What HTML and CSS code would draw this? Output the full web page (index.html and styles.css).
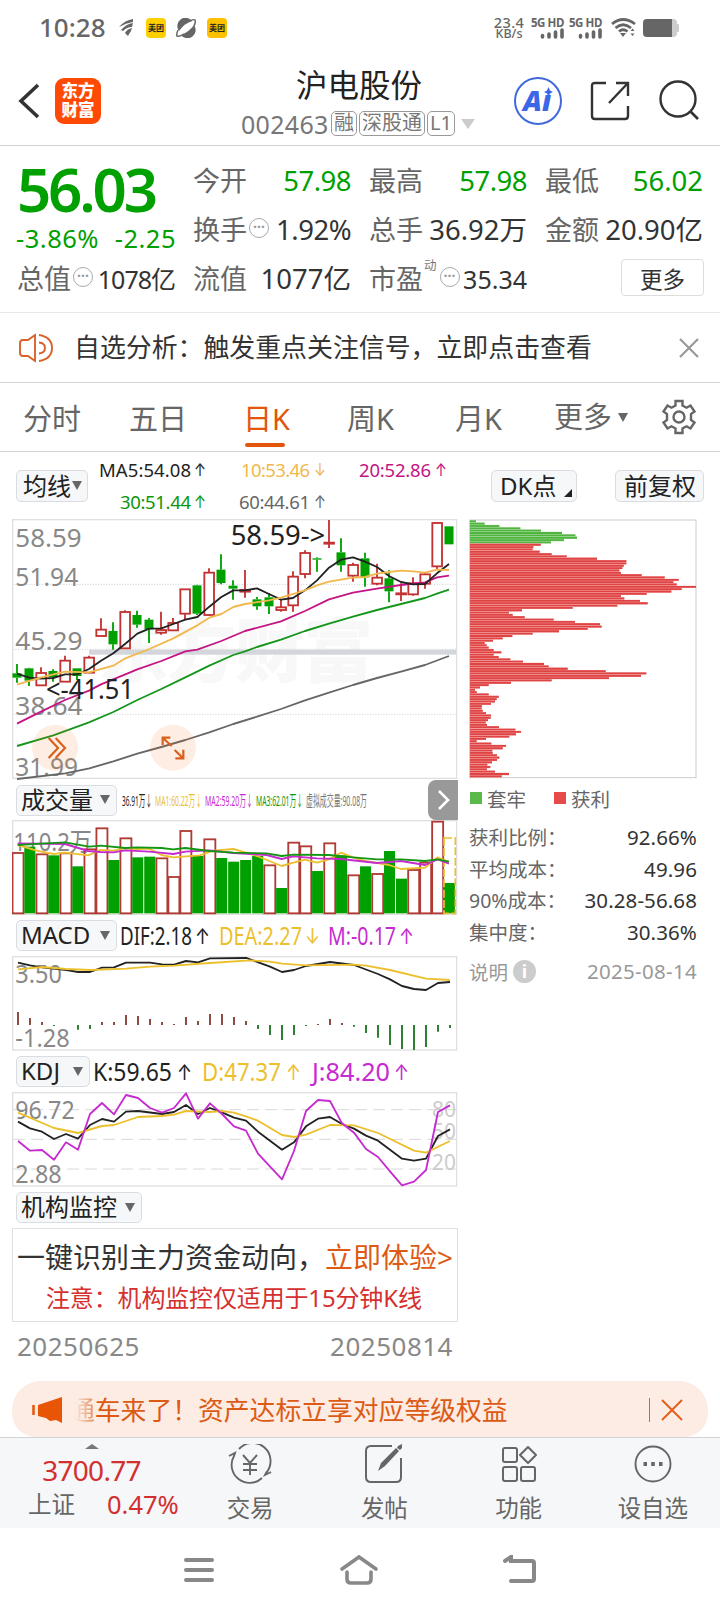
FILE: index.html
```html
<!DOCTYPE html>
<html lang="zh-CN">
<head>
<meta charset="UTF-8">
<title>沪电股份 002463</title>
<link rel="stylesheet" href="styles.css">
</head>
<body>

<!-- 状态栏 -->
<div class="status">
	<span class="clock">10:28</span>
	<svg class="st-wing" width="16" height="18" viewBox="0 0 16 18"><path d="M0 8Q6 1 14 0L14 3Q7 4 0 8ZM2 11Q7 5 14 4L13 8Q8 8 4 12ZM6 14Q8 10 13 9L12 12Q10 15 9 17Z" fill="#666"/></svg>
	<span class="mt">美团</span>
	<svg class="st-planet" width="21" height="20" viewBox="0 0 21 20"><path d="M3 13A8 8 0 0 1 16 3Q9 5 3 13ZM18 7A8 8 0 0 1 5 17Q13 14 18 7Z" fill="#666"/><path d="M2 12Q0 17 1 18Q4 19 8 16M14 3Q18 1 19 2Q20 4 18 8" fill="none" stroke="#666" stroke-width="1.500"/></svg>
	<span class="mt mt2">美团</span>
	<span class="speed"><b>23.4</b><i>KB/s</i></span>
	<span class="sim"><b>5G HD</b><svg width="24" height="11" viewBox="0 0 24 11"><path d="M2.500 9V7.500M9 9V6M15.500 9V4M22 9V2" stroke="#666" stroke-width="3.600" stroke-linecap="round"/></svg></span>
	<span class="sim"><b>5G HD</b><svg width="24" height="11" viewBox="0 0 24 11"><path d="M2.500 9V7.500M9 9V6M15.500 9V4M22 9V2" stroke="#666" stroke-width="3.600" stroke-linecap="round"/></svg></span>
	<svg class="wifi" width="25" height="20" viewBox="0 0 25 20"><path d="M1 6Q12 -3 24 6M4.500 10Q12 3.500 20 10M8 13.500Q12 10 16.500 13.500" fill="none" stroke="#666" stroke-width="2.800"/><path d="M9 15H15L12 19Z" fill="#666"/><path d="M19.500 13L21.500 10.500L23.500 13ZM19.500 15.500L21.500 18L23.500 15.500Z" fill="#666"/></svg>
	<svg class="battery" width="36" height="19" viewBox="0 0 36 19"><rect x="0" y="0" width="34" height="18" rx="4" fill="#ccc"/><rect x="33" y="5" width="3" height="8" rx="1" fill="#ccc"/><path d="M4 0H29V18H4Q0 18 0 14V4Q0 0 4 0Z" fill="#666"/></svg>
</div>

<!-- 标题栏 -->
<div class="header">
	<svg class="back" width="24" height="38" viewBox="0 0 24 38"><path d="M22 3L5 19L22 35" fill="none" stroke="#333" stroke-width="3.600"/></svg>
	<div class="logo">东方<br>财富</div>
	<div class="stock">
		<h1>沪电股份</h1>
		<div class="code"><span>002463</span><em>融</em><em>深股通</em><em>L1</em><svg width="14" height="10"><path d="M0 0H14L7 10Z" fill="#ccc"/></svg></div>
	</div>
	<svg class="tool-ai" width="48" height="48" viewBox="0 0 48 48"><circle cx="24" cy="24" r="23" fill="none" stroke="#4169dc" stroke-width="2"/><text x="9" y="34" class="ai-text" textLength="28" lengthAdjust="spacingAndGlyphs">Aı</text><path d="M34.500 10L36 13.500L39 15L36 16.500L34.500 19.500L33 16.500L30 15L33 13.500Z" fill="#3b66e8"/></svg>
	<svg class="tool-share" width="40" height="40" viewBox="0 0 40 40"><path d="M16 2H5Q2 2 2 5V35Q2 38 5 38H35Q38 38 38 35V25M26 2H38V15M38 2L19 22" fill="none" stroke="#333" stroke-width="2.400"/></svg>
	<svg class="tool-search" width="42" height="42" viewBox="0 0 42 42"><circle cx="20" cy="19" r="17.500" fill="none" stroke="#333" stroke-width="2.400"/><path d="M32 31L40 39" stroke="#333" stroke-width="2.600"/></svg>
</div>

<!-- 行情 -->
<div class="quote">
	<div class="price">
		<strong>56.03</strong>
		<div><span>-3.86%</span><span>-2.25</span></div>
	</div>
	<div class="cell"><label>今开</label><b class="down tight">57.98</b></div>
	<div class="cell"><label>最高</label><b class="down tight">57.98</b></div>
	<div class="cell"><label>最低</label><b class="down">56.02</b></div>
	<div class="cell"><label>换手</label><i class="dots">···</i><b class="tight">1.92%</b></div>
	<div class="cell"><label>总手</label><b>36.92万</b></div>
	<div class="cell"><label>金额</label><b>20.90亿</b></div>
	<div class="cell"><label>总值</label><i class="dots">···</i><b class="small">1078亿</b></div>
	<div class="cell"><label>流值</label><b>1077亿</b></div>
	<div class="cell"><label>市盈</label><sup>动</sup><i class="dots">···</i><b class="small pe">35.34</b></div>
	<div class="cell"><button class="more">更多</button></div>
</div>

<div class="notice">
	<svg width="34" height="30" viewBox="0 0 34 30"><path d="M16 2V28L9 23H4Q1 23 1 20V10Q1 7 4 7H9ZM20 9.500Q26 10 26 15Q26 20 20 20.500M20 2Q33 4 33 15Q33 26 20 28" fill="none" stroke="#d9622b" stroke-width="1.900"/></svg>
	<p>自选分析：触发重点关注信号，立即点击查看</p>
	<svg width="20" height="20" viewBox="0 0 20 20"><path d="M1 1L19 19M19 1L1 19" stroke="#999" stroke-width="2.200"/></svg>
</div>

<div class="tabs">
	<span>分时</span><span>五日</span><span class="on">日K</span><span>周K</span><span>月K</span><span class="tab-more">更多<svg width="10" height="9"><path d="M0 0H10L5 9Z" fill="#666"/></svg></span>
	<svg class="gear" width="36" height="36" viewBox="0 0 36 36"><path d="M14.500 2H21.500V6.500L25.500 8.700L29.500 6.500L33.500 12.500L30 15V21L33.500 23.500L29.500 29.500L25.500 27.300L21.500 29.500V34H14.500V29.500L10.500 27.300L6.500 29.500L2.500 23.500L6 21V15L2.500 12.500L6.500 6.500L10.500 8.700L14.500 6.500Z" fill="none" stroke="#666" stroke-width="2.400"/><circle cx="18" cy="18" r="5.500" fill="none" stroke="#666" stroke-width="2.400"/></svg>
</div>

<!-- 均线 -->
<div class="ma-row">
	<span class="btn ma-btn">均线<i class="tri"></i></span>
	<svg class="ma-read" width="362" height="67" viewBox="90 452 362 67">
		<g class="t18">
			<text x="99" y="477" textLength="92" fill="#222">MA5:54.08</text><text class="arr" x="194" y="476" textLength="12" lengthAdjust="spacingAndGlyphs" fill="#222">↑</text>
			<text x="241" y="477" textLength="69" fill="#f2b84b">10:53.46</text><text class="arr" x="314" y="476" textLength="12" lengthAdjust="spacingAndGlyphs" fill="#f2b84b">↓</text>
			<text x="359" y="477" textLength="72" fill="#c31583">20:52.86</text><text class="arr" x="435" y="476" textLength="12" lengthAdjust="spacingAndGlyphs" fill="#c31583">↑</text>
			<text x="120" y="509" textLength="71" fill="#0c960c">30:51.44</text><text class="arr" x="194" y="508" textLength="12" lengthAdjust="spacingAndGlyphs" fill="#0c960c">↑</text>
			<text x="239" y="509" textLength="71" fill="#666">60:44.61</text><text class="arr" x="314" y="508" textLength="12" lengthAdjust="spacingAndGlyphs" fill="#666">↑</text>
		</g>
	</svg>
	<span class="btn dk">DK点<svg width="8" height="8"><path d="M8 0V8H0Z" fill="#222"/></svg></span>
	<span class="btn fq">前复权</span>
</div>

<div class="body">
	<div class="charts">
		<svg id="kline" width="446" height="261" viewBox="36 12 1338 783"></svg>

		<div class="ind ind-vol">
			<span class="btn w101">成交量<i class="tri"></i></span>
			<svg width="252" height="24" viewBox="120 788 252 24">
				<g class="t15">
					<text x="122" y="806" textLength="30" lengthAdjust="spacingAndGlyphs" fill="#222">36.91万↓</text>
					<text x="155" y="806" textLength="47" lengthAdjust="spacingAndGlyphs" fill="#ecc02c">MA1:60.22万↓</text>
					<text x="205" y="806" textLength="48" lengthAdjust="spacingAndGlyphs" fill="#c52bcf">MA2:59.20万↓</text>
					<text x="256" y="806" textLength="47" lengthAdjust="spacingAndGlyphs" fill="#0c960c">MA3:62.01万↓</text>
					<text x="306" y="806" textLength="61" lengthAdjust="spacingAndGlyphs" fill="#777">虚拟成交量:90.08万</text>
				</g>
			</svg>
			<span class="expand"><svg width="12" height="20" viewBox="0 0 12 20"><path d="M1 1L10 10L1 19" fill="none" stroke="#fff" stroke-width="2.600"/></svg></span>
		</div>
		<svg id="vol" width="446" height="95" viewBox="36 120 1338 285"></svg>

		<div class="ind ind-macd">
			<span class="btn w101">MACD<i class="tri"></i></span>
			<svg width="320" height="32" viewBox="120 920 320 32">
				<g class="t24">
					<text x="120" y="945" textLength="72" lengthAdjust="spacingAndGlyphs" fill="#222">DIF:2.18</text><text class="arr" x="195" y="944" textLength="15" lengthAdjust="spacingAndGlyphs" fill="#222">↑</text>
					<text x="219" y="945" textLength="83" lengthAdjust="spacingAndGlyphs" fill="#ecc02c">DEA:2.27</text><text class="arr" x="305" y="944" textLength="15" lengthAdjust="spacingAndGlyphs" fill="#ecc02c">↓</text>
					<text x="328" y="945" textLength="68" lengthAdjust="spacingAndGlyphs" fill="#c52bcf">M:-0.17</text><text class="arr" x="399" y="944" textLength="15" lengthAdjust="spacingAndGlyphs" fill="#c52bcf">↑</text>
				</g>
			</svg>
		</div>
		<svg id="macd" width="446" height="95" viewBox="36 528 1338 285"></svg>

		<div class="ind ind-kdj">
			<span class="btn w75">KDJ<i class="tri"></i></span>
			<svg width="330" height="32" viewBox="93 1056 330 32">
				<g class="t24">
					<text x="93" y="1081" textLength="79" lengthAdjust="spacingAndGlyphs" fill="#222">K:59.65</text><text class="arr" x="177" y="1080" textLength="15" lengthAdjust="spacingAndGlyphs" fill="#222">↑</text>
					<text x="202" y="1081" textLength="79" lengthAdjust="spacingAndGlyphs" fill="#ecc02c">D:47.37</text><text class="arr" x="286" y="1080" textLength="15" lengthAdjust="spacingAndGlyphs" fill="#ecc02c">↑</text>
					<text x="312" y="1081" textLength="78" lengthAdjust="spacingAndGlyphs" fill="#c52bcf">J:84.20</text><text class="arr" x="394" y="1080" textLength="15" lengthAdjust="spacingAndGlyphs" fill="#c52bcf">↑</text>
				</g>
			</svg>
		</div>
		<svg id="kdj" width="446" height="95" viewBox="36 126 1338 285"></svg>

		<div class="ind ind-org">
			<span class="btn w126">机构监控<i class="tri"></i></span>
		</div>
		<div class="promo">
			<p>一键识别主力资金动向，<a>立即体验&gt;</a></p>
			<p class="warn">注意：机构监控仅适用于15分钟K线</p>
		</div>
		<div class="dates"><span>20250625</span><span>20250814</span></div>
	</div>

	<!-- 筹码分布 -->
	<div class="chips">
		<svg id="chip" width="228" height="260" viewBox="27 29 684 780"></svg>
		<div class="legend"><i class="sq g"></i>套牢<i class="sq r"></i>获利</div>
		<dl>
			<dt>获利比例：</dt><dd>92.66%</dd>
			<dt>平均成本：</dt><dd>49.96</dd>
			<dt>90%成本：</dt><dd>30.28-56.68</dd>
			<dt>集中度：</dt><dd>30.36%</dd>
		</dl>
		<div class="explain"><span>说明</span><i>i</i><time>2025-08-14</time></div>
	</div>
</div>

<div class="banner">
	<svg class="horn" width="31" height="26" viewBox="0 0 31 26"><path d="M1.500 8V18" stroke="#e85504" stroke-width="2.500"/><path d="M30 0V26L24 23L18 24L14 21L6 19V8Z" fill="#e85504"/></svg>
	<p><span>通</span>车来了！资产达标立享对应等级权益</p>
	<i class="bar"></i>
	<svg width="22" height="22" viewBox="0 0 22 22"><path d="M1 1L21 21M21 1L1 21" stroke="#e2601c" stroke-width="2"/></svg>
</div>

<!-- 底部导航 -->
<div class="nav">
	<div class="index">
		<svg width="14" height="5"><path d="M7 0L14 5H0Z" fill="#777"/></svg>
		<b>3700.77</b>
		<div><span>上证</span><em>0.47%</em></div>
	</div>
	<div class="item">
		<svg width="44" height="40" viewBox="0 0 44 40"><g fill="none" stroke="#666" stroke-width="1.900"><path d="M11 5A18 18 0 0 1 38 29L37 31L43 28M34 34A18 18 0 0 1 6 12L7 9L1 12M15 11L22 19L29 11M15 20H29M15 26H29M22 19V31"/></g></svg>
		<span>交易</span>
	</div>
	<div class="item">
		<svg width="38" height="40" viewBox="0 0 38 40"><path d="M27 2H6Q1 2 1 7V33Q1 38 6 38H31Q36 38 36 33V14" fill="none" stroke="#666" stroke-width="2"/><path d="M13 27L16 19L31 4L34 7L20 22ZM33 2L37 0L37 4L35 6L32 4Z" fill="#666"/></svg>
		<span>发帖</span>
	</div>
	<div class="item">
		<svg width="36" height="38" viewBox="0 0 36 38"><g fill="none" stroke="#666" stroke-width="2"><rect x="2" y="3" width="14" height="14" rx="2"/><rect x="2" y="22" width="14" height="14" rx="2"/><rect x="20" y="22" width="14" height="14" rx="2"/><path d="M27 2L35 10L27 18L19 10Z" stroke-linejoin="round"/></g></svg>
		<span>功能</span>
	</div>
	<div class="item">
		<svg width="38" height="38" viewBox="0 0 38 38"><circle cx="19" cy="19" r="17.500" fill="none" stroke="#666" stroke-width="1.900"/><path d="M9.500 17H13V21H9.500ZM17.200 17H20.800V21H17.200ZM25 17H28.500V21H25Z" fill="#666"/></svg>
		<span>设自选</span>
	</div>
</div>

<div class="sysnav">
	<svg width="32" height="28" viewBox="0 0 32 28"><path d="M3 4H29M3 14H29M3 24H29" stroke="#888" stroke-width="4" stroke-linecap="round"/></svg>
	<svg width="40" height="32" viewBox="0 0 40 32"><path d="M3 15L20 3L37 15" fill="none" stroke="#888" stroke-width="3.600" stroke-linecap="round"/><path d="M8 18V25Q8 29 12 29H28Q32 29 32 25V18" fill="none" stroke="#888" stroke-width="3.600" stroke-linecap="round"/></svg>
	<svg width="34" height="30" viewBox="0 0 34 30"><path d="M2 6L8 2V6H29Q31 6 31 8V24Q31 26 29 26H8" fill="none" stroke="#888" stroke-width="4" stroke-linecap="round"/></svg>
</div>

<script src="charts.js"></script>
</body>
</html>
```
FILE: styles.css
```css
* {box-sizing: border-box; margin: 0; padding: 0;}

body {width: 720px; height: 1612px; overflow: hidden; background: #fff; color: #333;
	font-family: "Noto Sans", "Noto Sans CJK SC", sans-serif; display: flex; flex-direction: column;}
body > div {flex: none;}
svg {display: block; flex: none;}
svg text {white-space: pre;}
i, em {font-style: normal;}
b {font-weight: normal;}

/* 状态栏 */
.status {height: 60px; display: flex; align-items: center; padding: 0 41px 4px 39px; color: #666;}
.clock {font-size: 26px; width: 80px; font-weight: 500; line-height: 30px; position: relative; top: -1px;}
.mt {width: 20px; height: 20px; border-radius: 4px; background: #ffd000; color: #222; font-size: 8px; font-weight: bold; line-height: 20px; text-align: center; margin: 0 10px 0 11px;}
.mt2 {background: #ffc000; margin-left: 10px;}
.speed {display: flex; flex-direction: column; align-items: center; margin-left: auto; width: 34px; font-weight: 500; line-height: 12.500px;}
.speed b {font-size: 14.500px; font-weight: 500; letter-spacing: .4px;}
.speed i {font-size: 12.500px;}
.sim {display: flex; flex-direction: column; align-items: flex-end; width: 32px; margin-left: 6px;}
.sim b {font-size: 11.500px; font-weight: bold; line-height: 11px; white-space: nowrap; letter-spacing: -.4px;}
.wifi {margin-left: 9px;}
.battery {margin-left: 7px;}

/* 标题栏 */
.header {height: 86px; border-bottom: 1px solid #d2d2d2; display: flex; align-items: center; padding: 0 20px 4px 16px;}
.logo {width: 46px; height: 46px; margin-left: 15px; border-radius: 9px; background: #ff4a05; color: #fff; font-size: 16.500px; font-weight: 900; line-height: 19px; text-align: center; padding-top: 3px;}
.stock {width: 234px; margin-left: 141px; padding-top: 4px; display: flex; flex-direction: column;}
.stock h1 {font-size: 31.500px; font-weight: normal; line-height: 40px; color: #222; text-align: center;}
.code {display: flex; align-items: center; height: 30px; font-size: 25px; color: #777; margin-top: 4px; margin-bottom: 2px; margin-left: -1px;}
.code span {width: 90px; letter-spacing: .3px;}
.code em {height: 25px; border: 1.500px solid #999; border-radius: 5px; font-size: 20px; line-height: 21px; padding: 0 2px; margin-right: 2px;}
.code svg {margin-left: 4px;}
.tool-ai {margin-left: 38px;}
.ai-text {font-family: "Noto Sans"; font-weight: 900; font-size: 28px; font-style: italic; fill: #3b66e8;}
.tool-share {margin-left: 28px;}
.tool-search {margin-left: auto;}

/* 行情 */
.quote {height: 167px; border-bottom: 1px solid #e8e8e8; padding: 10px 17px 8px; display: grid; grid-template-columns: repeat(4, 158px); grid-template-rows: 49px 49.500px 49.500px; column-gap: 18px;}
.price {grid-row: span 2; color: #00a000; display: flex; flex-direction: column;}
.price strong {font-size: 60px; font-weight: 600; line-height: 66px; letter-spacing: -3.200px; height: 66px;}
.price div {display: flex; justify-content: space-between; font-size: 25.500px; line-height: 32px; margin: 0 -1px; letter-spacing: .5px;}
.cell {display: flex; align-items: center; line-height: 40px;}
.cell label {font-size: 27px; color: #666;}
.cell b {margin-left: auto; font-size: 27.500px; letter-spacing: 0; white-space: nowrap;}
.cell b.down {color: #00a000;}
.cell b.tight {letter-spacing: -.5px;}
.cell b.small {font-size: 25px; letter-spacing: -1px;}
.cell b.pe {letter-spacing: 0;}
.cell sup {font-size: 12.500px; line-height: 14px; color: #777; align-self: flex-start; margin: 4px 1px 0 1px;}
.dots {width: 20px; height: 20px; border: 1.500px solid #aaa; border-radius: 50%; font-size: 14px; font-weight: bold; line-height: 16px; color: #999; text-align: center; margin: 0 0 4px 2px;}
.more {margin-left: auto; margin-right: -1px; margin-bottom: 3px; width: 83px; height: 37px; border: 1px solid #ddd; border-radius: 4px; background: #fff; font: 22.500px/32px "Noto Sans CJK SC", sans-serif; color: #333;}

.notice {height: 70px; border-bottom: 1px solid #d6d6d6; display: flex; align-items: center; padding: 0 21px 0 19px;}
.notice p {font-size: 25.900px; margin-left: 21px; flex: 1; white-space: nowrap; line-height: 36px; position: relative; top: -1px;}

.tabs {height: 69px; border-bottom: 1px solid #d2d2d2; display: flex; align-items: center; font-size: 29px; color: #666;}
.tabs span {line-height: 72px; height: 68px; white-space: nowrap; width: 106px; padding-left: 23px;}
.tabs span:nth-child(3) {width: 103px; padding-left: 31px;}
.tabs span:nth-child(4) {width: 107px; padding-left: 32px;}
.tabs span:nth-child(5) {width: 132px; padding-left: 33px;}
.tabs .on {color: #e2560c; position: relative;}
.tabs .on::after {content: ""; position: absolute; left: 33px; bottom: 4px; width: 40px; height: 4px; border-radius: 2px; background: #e2560c;}
.tabs .tab-more {padding-left: 0; display: flex; align-items: center; gap: 6px;}
.gear {margin-left: auto; margin-right: 23px;}

/* 按钮 */
.btn {display: flex; align-items: center; height: 32px; border: 1px solid #d9dce1; border-radius: 5px; background: #f6f7f9; color: #222; font-size: 24px; line-height: 28px; padding: 0 5px 1px 4px; white-space: nowrap; flex: none;}
.tri {border: 5px solid transparent; border-top: 9px solid #666; border-bottom: 0; margin-left: auto;}
.ma-row {height: 67px; display: flex; padding-left: 16px;}
.ma-row .btn {margin-top: 18px;}
.ma-btn {width: 72px; padding-left: 6px;}
.ma-read {margin-left: 2px;}
.dk {width: 86px; margin-left: 39px; padding: 0 4px 1px 8px; justify-content: space-between;}
.dk svg {align-self: flex-end; margin-bottom: 3px;}
.fq {width: 89px; margin-left: 38px; padding: 0 8px 1px;}
.t18 {font-size: 18.500px;}
.t15 {font-size: 15px;}
.t24 {font-size: 24.500px;}
.arr {font-family: Inter, "DejaVu Sans", sans-serif; font-size: 17px;}
.t24 .arr {font-size: 22px;}

/* 图表区 */
.body {height: 862px; display: flex; padding-left: 12px;}
.charts {width: 446px; display: flex; flex-direction: column;}
.charts > * {flex: none;}
.ind {display: flex; padding-left: 4px; position: relative; align-items: center;}
.ind .btn {height: 31px;}
.ind svg {margin-left: 3px;}
.ind-vol {height: 40px;}
.ind-macd {height: 41px;}
.ind-kdj {height: 41px;}
.ind-org {height: 41px;}
.w101 {width: 101px;}
.w75 {width: 74px;}
.w126 {width: 126px;}
.ind .tri {margin-right: 1px;}
.expand {position: absolute; right: 0; top: 0; width: 30px; height: 40px; background: #999; border-radius: 8px 0 0 8px; display: flex; align-items: center; justify-content: center;}
.expand svg {margin-left: 2px;}
.promo {height: 94px; border: 1.500px solid #e0e0e0; padding: 6px 0 0 4px; font-size: 28px; white-space: nowrap;}
.promo p {line-height: 44px;}
.promo a {color: #dd5a14;}
.promo .warn {font-size: 24px; line-height: 37px; color: #d5302f; margin-left: 29px; letter-spacing: -.15px;}
.dates {display: flex; justify-content: space-between; padding: 0 5px; font-size: 26px; line-height: 49px; color: #888; letter-spacing: .5px;}

.grid-text {font-size: 78px; fill: #888;}
.mark {font-size: 81px; fill: #222;}
.water {font-size: 210px; font-weight: 900; fill: #f8f8f8; font-family: "Noto Sans CJK SC", sans-serif;}
.level {font-size: 66px; fill: #ccc;}

.chips {width: 228px; margin-left: 11px;}
.legend {display: flex; align-items: center; height: 38px; font-size: 19.500px; color: #666;}
.sq {width: 12px; height: 12px; margin: 0 5px 0 1px;}
.sq.g {background: #5ab948;}
.sq.r {background: #e54b4b; margin-left: 28px;}
.chips dl {display: grid; grid-template-columns: auto auto; grid-auto-rows: 31.600px; padding-top: 5px;}
.chips dt {font-size: 19.500px; line-height: 31px; color: #666; white-space: nowrap;}
.chips dd {font-size: 20.500px; line-height: 31px; color: #333; text-align: right; letter-spacing: .1px;}
.explain {display: flex; align-items: center; height: 30px; margin-top: 8px; color: #999; font-size: 19.500px;}
.explain i {width: 23px; height: 23px; border-radius: 50%; background: #ccc; color: #fff; font-weight: bold; font-size: 18px; line-height: 22px; text-align: center; margin-left: 5px;}
.explain time {margin-left: auto; font-size: 20.500px; letter-spacing: .3px;}

/* 横幅 */
.banner {height: 56px; margin: 0 12px; background: #fcece3; border-radius: 29px 29px 24px 24px; display: flex; align-items: center; padding: 2px 25px 0 20px; color: #dd5a14;}
.banner p {font-size: 25.800px; white-space: nowrap; margin-left: 6px; line-height: 40px;}
.banner p span {background: linear-gradient(90deg, #fcece3 20%, #e08a58); -webkit-background-clip: text; background-clip: text; color: transparent;}
.banner .bar {width: 1.500px; height: 24px; background: #c66a38; margin-left: auto; margin-right: 11px;}

.nav {height: 91px; border-top: 1px solid #d0d3d6; background: #f6f7f9; display: flex; color: #666;}
.index {width: 183px; display: flex; flex-direction: column; align-items: center; padding-top: 6px; color: #d22f2f;}
.index b {font-size: 28px; line-height: 36px; letter-spacing: -.7px; margin-top: 3px;}
.index div {align-self: stretch; display: flex; padding-left: 28px; line-height: 32px; font-size: 25.500px;}
.index div span {font-size: 23.500px; color: #666; width: 79px;}
.item {flex: 1; display: flex; flex-direction: column; align-items: center; padding-top: 6px; font-size: 23.500px;}
.item svg {height: 40px;}
.item span {line-height: 34px; margin-top: 7px;}

.sysnav {height: 84px; display: flex; justify-content: center; align-items: center; gap: 124px;}
```
FILE: charts.js
```js
var NS = "http://www.w3.org/2000/svg";
var RED = "#c33232", GREEN = "#00a000";

function add(svg, name, attrs, text) {
	var el = document.createElementNS(NS, name);
	for (var k in attrs) el.setAttribute(k, attrs[k]);
	if (text) el.textContent = text;
	svg.appendChild(el);
	return el;
}
function line(svg, pts, color, w) {
	add(svg, "polyline", {points: pts, fill: "none", stroke: color, "stroke-width": w || 5.5, "stroke-linejoin": "round"});
}
function frame(svg, y, h) {
	add(svg, "rect", {x: 38, y: y, width: 1332, height: h, fill: "none", stroke: "#e0e0e0", "stroke-width": 4});
}
function label(svg, x, y, w, cls, text) {
	add(svg, "text", {x: x, y: y, textLength: w, lengthAdjust: "spacingAndGlyphs", "class": cls}, text);
}

// ---- 日K ----
var k = document.getElementById("kline");
add(k, "text", {x: 295, y: 487, textLength: 825, "class": "water"}, "东方财富");
[208, 403, 598].forEach(function (y) {
	add(k, "path", {d: "M38 " + y + "H1370", stroke: "#ccc", "stroke-width": 3, "stroke-dasharray": "3 5"});
});
add(k, "rect", {x: 267, y: 404, width: 1104, height: 15, fill: "#d3d7dc"});
frame(k, 14, 776);
label(k, 46, 97, 199, "grid-text", "58.59");
label(k, 46, 213, 189, "grid-text", "51.94");
label(k, 46, 406, 202, "grid-text", "45.29");
label(k, 46, 600, 202, "grid-text", "38.64");
label(k, 46, 783, 188, "grid-text", "31.99");

// 颜色, 最高, 实体上, 实体下, 最低
var candles = [
	["g",447,475,488,503],["g",458,460,497,513],["r",457,474,511,511],["g",463,468,486,500],["r",422,437,500,500],
	["g",460,460,483,495],["r",422,428,473,473],["r",310,344,363,363],["g",322,348,388,404],["r",286,291,400,400],
	["g",287,300,329,338],["g",309,314,343,384],["r",290,345,353,359],["r",309,324,346,346],["r",222,223,296,313],
	["g",209,211,296,300],["r",160,173,300,300],["g",118,164,204,208],["g",196,212,221,254],["r",165,225,230,248],
	["g",246,253,274,284],["g",234,247,274,297],["r",253,277,285,290],["r",169,185,271,290],["r",106,114,177,190],
	["g",127,130,134,170],["r",15,83,86,99],["g",70,112,151,170],["r",143,150,182,200],["g",113,130,187,215],
	["r",146,188,206,211],["g",166,190,229,262],["r",205,235,238,258],["r",187,205,238,242],["r",173,178,206,221],
	["r",22,24,154,165],["g",34,34,88,88]
];
candles.forEach(function (c, i) {
	var x = 51 + 36 * i, color = c[0] == "g" ? GREEN : RED;
	add(k, "path", {d: "M" + x + " " + c[1] + "V" + c[2] + "M" + x + " " + c[3] + "V" + c[4], stroke: color, "stroke-width": 5.5});
	if (c[0] == "g") {
		add(k, "rect", {x: x - 13.5, y: c[2], width: 27, height: c[3] - c[2], fill: color});
	} else {
		add(k, "rect", {x: x - 14, y: c[2], width: 29, height: Math.max(c[3] - c[2], 1), fill: "#fff", stroke: color, "stroke-width": 5.5});
	}
});
line(k, "51,792 196,775 268,760 340,739 412,716 484,696 556,675 628,652 700,627 771,605 843,582 915,556 987,533 1059,510 1131,489 1203,470 1275,450 1347,423", "#666");
line(k, "51,693 160,661 267,622 340,591 412,555 484,522 556,487 628,452 700,420 735,409 771,396 843,374 915,348 987,326 1059,305 1131,285 1203,267 1275,249 1311,236 1347,224", "#14961a");
line(k, "51,626 123,590 195,555 267,527 303,508 376,478 412,463 484,438 556,409 592,404 664,378 735,348 843,319 915,288 987,253 1059,233 1131,221 1203,210 1275,202 1311,187 1347,182", "#c31583");
line(k, "51,476 87,488 123,491 159,489 195,478 231,478 267,462 303,437 340,415 376,386 412,356 448,341 484,340 520,327 556,314 592,306 628,275 664,246 700,226 735,226 771,220 807,237 843,254 879,249 915,226 951,196 987,158 1023,134 1059,127 1095,140 1131,156 1167,183 1203,201 1239,208 1275,207 1311,175 1347,147", "#222");
line(k, "51,509 123,487 195,470 267,472 340,452 376,430 448,402 520,370 592,331 628,308 664,297 700,276 735,267 807,256 843,248 915,226 951,211 987,200 1059,188 1095,186 1131,176 1167,171 1203,167 1239,169 1275,173 1311,164 1347,165", "#f2b84b");
label(k, 692, 91, 284, "mark", "58.59->");
label(k, 138, 553, 264, "mark", "<-41.51");
add(k, "circle", {cx: 165, cy: 698, r: 69, fill: "#f56b1c", opacity: .12});
add(k, "circle", {cx: 519, cy: 698, r: 69, fill: "#f56b1c", opacity: .12});
add(k, "path", {d: "M146 669L174 699L146 729M167 669L195 699L167 729M488 690V668H511M489 669L515 693M524 705L549 730M526 730H550V704", fill: "none", stroke: "#d9601c", "stroke-width": 6.5});

// ---- 成交量 ----
var v = document.getElementById("vol");
frame(v, 122, 281);
label(v, 40, 213, 236, "grid-text", "110.2万");
var vols = "r219 g200 r223 g226 r220 g259 r208 r145 g240 r175 g232 g230 r235 r291 r153 g228 r178 g234 g245 g240 g228 r256 g324 r188 r199 g273 r190 g226 r286 g259 r282 g213 g296 r270 r248 r125 g309".split(" ");
vols.forEach(function (s, i) {
	var x = 53.5 + 35.97 * i, y = +s.slice(1);
	if (s[0] == "g") {
		add(v, "rect", {x: x - 16.5, y: y, width: 33, height: 400 - y, fill: GREEN});
	} else {
		add(v, "rect", {x: x - 16, y: y, width: 33, height: 400 - y, fill: "none", stroke: "#b03a34", "stroke-width": 5.5});
	}
});
add(v, "rect", {x: 1332, y: 174, width: 34, height: 226, fill: "none", stroke: "#ecc02c", "stroke-width": 5, "stroke-dasharray": "24 7"});
line(v, "53,195 110,212 160,222 195,218 265,226 300,210 340,212 376,205 412,207 448,206 484,225 520,232 600,226 640,212 700,207 735,217 771,228 845,258 880,248 915,239 951,248 987,238 1023,218 1059,232 1095,243 1167,255 1203,267 1275,263 1313,232 1347,246", "#ecc02c");
line(v, "53,190 195,192 265,213 300,216 340,217 376,211 448,215 520,222 556,215 628,211 700,219 800,225 845,237 880,229 951,235 1023,237 1131,249 1203,243 1275,255 1313,238 1347,251", "#c52bcf");
line(v, "53,195 123,191 195,187 267,200 303,197 376,204 412,202 484,204 520,208 556,204 628,213 700,218 800,220 845,228 880,224 987,225 1059,232 1131,238 1203,238 1275,243 1313,238 1347,245", "#149614");

// ---- MACD ----
var m = document.getElementById("macd");
frame(m, 530, 280);
label(m, 46, 609, 140, "grid-text", "3.50");
label(m, 46, 801, 163, "grid-text", "-1.28");
[696,714,726,738,735,749,747,726,726,705,708,717,726,732,711,723,702,702,711,723,747,765,780,765,738,732,717,729,740,759,773,795,807,810,801,755,744].forEach(function (y, i) {
	add(m, "path", {d: "M" + (54 + 36 * i) + " 735V" + y, stroke: y < 735 ? "#8f4a44" : "#2f7f33", "stroke-width": 6});
});
line(m, "54,548 90,556 126,562 200,570 234,576 270,576 306,563 342,562 378,548 450,548 486,553 522,554 558,543 594,547 630,535 740,534 775,547 810,560 846,576 882,570 918,558 990,546 1062,555 1134,582 1170,598 1206,618 1242,627 1278,630 1314,609 1350,606", "#222");
line(m, "54,568 126,561 198,567 270,570 378,566 450,560 522,557 630,549 750,541 810,545 846,551 918,556 1062,554 1098,557 1170,570 1278,596 1350,600", "#ecc02c");

// ---- KDJ ----
var j = document.getElementById("kdj");
frame(j, 128, 280);
[179, 268, 357].forEach(function (y) {
	add(j, "path", {d: "M40 " + y + "H1370", stroke: "#d8d8d8", "stroke-width": 3, "stroke-dasharray": "35 19"});
});
label(j, 46, 208, 178, "grid-text", "96.72");
label(j, 46, 399, 139, "grid-text", "2.88");
label(j, 1296, 200, 72, "level", "80");
label(j, 1296, 268, 72, "level", "50");
label(j, 1296, 360, 72, "level", "20");
line(j, "54,215 90,235 126,245 162,267 198,252 234,266 270,225 306,207 342,215 378,185 414,183 486,192 522,186 558,165 594,192 630,174 666,187 702,203 738,212 774,245 846,299 882,277 918,229 954,206 990,201 1026,222 1062,236 1098,257 1134,272 1206,326 1242,332 1278,326 1314,258 1350,238", "#222");
line(j, "54,188 162,234 234,249 306,228 342,225 414,201 486,198 522,194 558,183 630,186 666,183 702,188 738,199 774,212 846,255 882,261 918,254 990,225 1062,226 1134,249 1242,302 1278,308 1350,273", "#ecc02c");
line(j, "54,273 90,302 126,300 162,329 198,277 234,299 270,192 306,159 342,193 378,135 414,144 450,174 486,188 522,174 558,130 594,206 630,160 666,192 702,229 738,242 774,311 846,388 882,303 918,183 954,150 990,153 1026,220 1062,248 1098,297 1134,321 1170,364 1206,406 1242,395 1278,360 1314,186 1350,166", "#c52bcf");

// ---- 筹码分布 ----
var c = document.getElementById("chip");
add(c, "rect", {x: 29, y: 32, width: 679, height: 773, fill: "none", stroke: "#ccc", "stroke-width": 3});
var chips = [48,74,118,181,243,306,346,351,312,273,242,220,218,239,275,320,411,499,499,491,487,478,483,545,614,656,640,650,708,665,634,560,483,493,540,563,472,338,186,147,158,194,281,345,420,425,383,297,218,157,128,99,74,80,86,101,124,101,116,151,189,252,266,323,437,559,543,447,275,153,86,60,45,50,86,116,110,105,93,66,65,68,78,93,92,84,77,81,117,166,183,168,148,78,50,94,138,128,97,98,111,118,111,96,82,91,81,105,147,125];
var step = 765 / (chips.length - 1);
chips.forEach(function (x, i) {
	var y = 36 + step * i, green = i < 10;
	add(c, "path", {d: "M30 " + y + "H" + x, stroke: green ? "#a4dc98" : "#f5a0a0", "stroke-width": 7});
	add(c, "path", {d: "M30 " + y + "H" + x, stroke: green ? "#52b440" : "#df4444", "stroke-width": 5.5});
});
```
